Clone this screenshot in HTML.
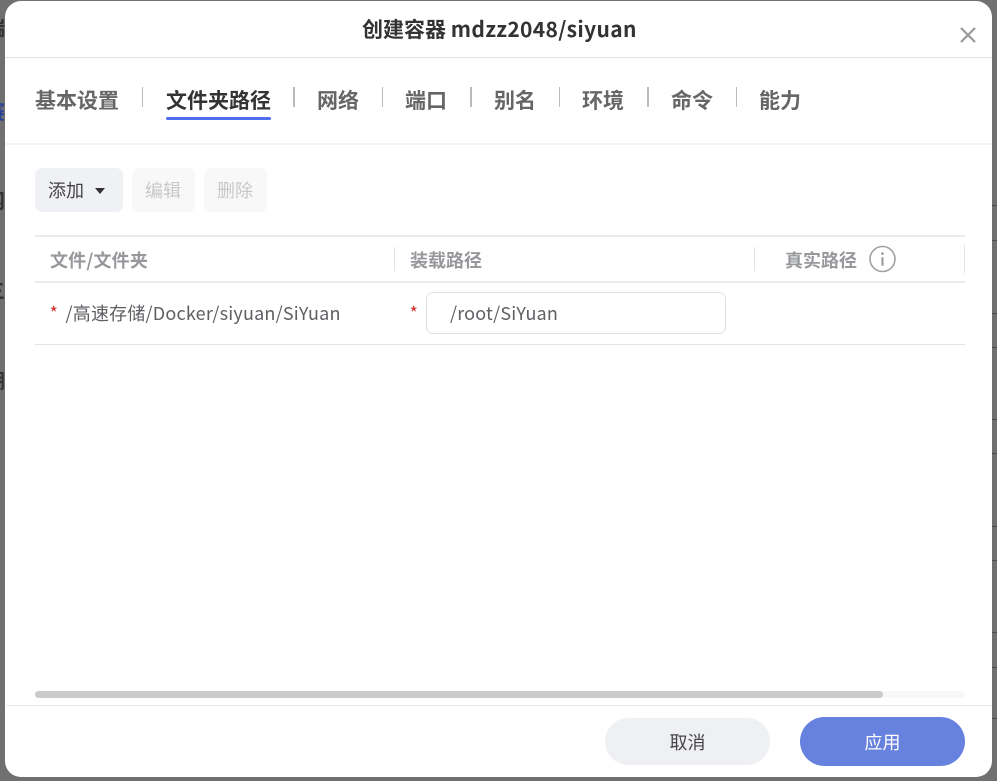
<!DOCTYPE html>
<html><head><meta charset="utf-8">
<style>
*{box-sizing:border-box;margin:0;padding:0}
html,body{width:997px;height:781px;overflow:hidden}
body{background:#707070;position:relative;font-family:"Noto Sans CJK SC","Liberation Sans",sans-serif;color:#333}
.a{position:absolute;white-space:nowrap}
.m{left:5px;top:1px;width:987px;height:776px;background:#fff;border-radius:16px}
.l{position:absolute;height:1px}
.t{position:absolute;top:85px;font-size:21px;line-height:30px;font-weight:700;color:#666;white-space:nowrap}
.s{position:absolute;top:87px;width:2px;height:20px;background:#bbb}
.h{position:absolute;top:248px;font-size:18px;line-height:24px;font-weight:700;color:#96989c;white-space:nowrap}
.v{position:absolute;width:1px;background:#e4e4e6}
.st{position:absolute;color:#d03030;font-size:18px;line-height:20px}
.g{position:absolute;left:-15px;font-size:20px;line-height:24px;font-weight:700;color:#333}
.k{position:absolute;left:992px;width:5px;height:1px;background:#4e4e4e}
</style></head><body>
<div class="g" style="top:15px">端</div>
<div class="g" style="top:99px;color:#26409a">赛</div>
<div class="g" style="top:188px">网</div>
<div class="g" style="top:278px">三</div>
<div class="g" style="top:368px">棚</div>
<div class="k" style="top:205px"></div><div class="k" style="top:240px"></div><div class="k" style="top:313px"></div><div class="k" style="top:347px"></div><div class="k" style="top:419px"></div><div class="k" style="top:453px"></div><div class="k" style="top:526px"></div><div class="k" style="top:560px"></div><div class="k" style="top:632px"></div><div class="k" style="top:667px"></div><div class="k" style="top:718px"></div>
<div class="a m"></div>

<div class="a" style="left:362px;top:15px;font-size:21px;line-height:28px;font-weight:700;color:#333">创建容器 <span style="letter-spacing:.33px">mdzz2048/siyuan</span></div>
<svg class="a" style="left:959px;top:26px" width="18" height="18" viewBox="0 0 18 18"><path d="M2 2L16 16M16 2L2 16" stroke="#97999d" stroke-width="2.2" fill="none"/></svg>
<div class="l" style="left:5px;top:57px;width:987px;background:#e2e2e2"></div>

<div class="t" style="left:35px">基本设置</div><div class="s" style="left:142px;width:1px"></div>
<div class="t" style="left:166px;color:#333">文件夹路径</div><div class="a" style="left:166px;top:117px;width:105px;height:3px;border-radius:2px;background:#4f6ef0"></div>
<div class="s" style="left:293px"></div>
<div class="t" style="left:317px">网络</div><div class="s" style="left:382px;width:1px"></div>
<div class="t" style="left:405px">端口</div><div class="s" style="left:470px"></div>
<div class="t" style="left:494px">别名</div><div class="s" style="left:559px;width:1px"></div>
<div class="t" style="left:582px">环境</div><div class="s" style="left:647px"></div>
<div class="t" style="left:671px">命令</div><div class="s" style="left:736px;width:1px"></div>
<div class="t" style="left:759px">能力</div>
<div class="l" style="left:5px;top:143px;width:987px;height:2px;background:#f3f3f4"></div>

<div class="a" style="left:35px;top:168px;width:88px;height:44px;border-radius:7px;background:#f0f1f4"></div>
<div class="a" style="left:48px;top:178px;font-size:18px;line-height:25px;color:#444">添加</div>
<div class="a" style="left:95px;top:188px;width:0;height:0;border-left:5.5px solid transparent;border-right:5.5px solid transparent;border-top:6.5px solid #333"></div>
<div class="a" style="left:132px;top:168px;width:63px;height:44px;border-radius:7px;background:#f8f8f9"></div>
<div class="a" style="left:145px;top:178px;font-size:18px;line-height:25px;color:#c8c8ca">编辑</div>
<div class="a" style="left:204px;top:168px;width:63px;height:44px;border-radius:7px;background:#f8f8f9"></div>
<div class="a" style="left:217px;top:178px;font-size:18px;line-height:25px;color:#c8c8ca">删除</div>

<div class="l" style="left:35px;top:235px;width:930px;height:2px;background:#ececed"></div>
<div class="h" style="left:50px;letter-spacing:.17px">文件/文件夹</div>
<div class="v" style="left:394px;top:247px;height:24px"></div>
<div class="h" style="left:410px">装载路径</div>
<div class="v" style="left:754px;top:247px;height:24px"></div>
<div class="h" style="left:785px">真实路径</div>
<svg class="a" style="left:868px;top:245px" width="28" height="28" viewBox="0 0 28 28"><circle cx="14.5" cy="14" r="12.5" fill="none" stroke="#a0a1a4" stroke-width="1.6"/><circle cx="14.5" cy="8.6" r="1.4" fill="#a0a1a4"/><rect x="13.4" y="12" width="2.2" height="9" rx="1" fill="#a0a1a4"/></svg>
<div class="v" style="left:964px;top:245px;height:28px"></div>
<div class="l" style="left:35px;top:281px;width:930px;height:2px;background:#ececed"></div>

<div class="st" style="left:49.5px;top:303px">*</div>
<div class="a" style="left:65.5px;top:301px;font-size:18px;line-height:25px;color:#5f6064;letter-spacing:.2px">/高速存储/Docker/siyuan/SiYuan</div>
<div class="st" style="left:409.5px;top:303px">*</div>
<div class="a" style="left:426px;top:292px;width:300px;height:42px;border:1px solid #dfe0e6;border-radius:7px;background:#fff"></div>
<div class="a" style="left:450px;top:301px;font-size:18px;line-height:25px;color:#5f6064;letter-spacing:.17px">/root/SiYuan</div>
<div class="l" style="left:35px;top:344px;width:930px;height:1px;background:#e4e4e5"></div>

<div class="a" style="left:35px;top:691px;width:930px;height:7px;border-radius:4px;background:#f8f8f8"></div>
<div class="a" style="left:35px;top:691px;width:848px;height:7px;border-radius:4px;background:#cacaca"></div>
<div class="l" style="left:6px;top:705px;width:986px;background:#e6e6e6"></div>

<div class="a" style="left:605px;top:718px;width:165px;height:47px;border-radius:24px;background:#eff0f4;text-align:center;font-size:18px;line-height:48px;color:#444">取消</div>
<div class="a" style="left:800px;top:717px;width:165px;height:49px;border-radius:25px;background:#6781df;text-align:center;font-size:18px;line-height:50px;color:#fff">应用</div>
</body></html>
